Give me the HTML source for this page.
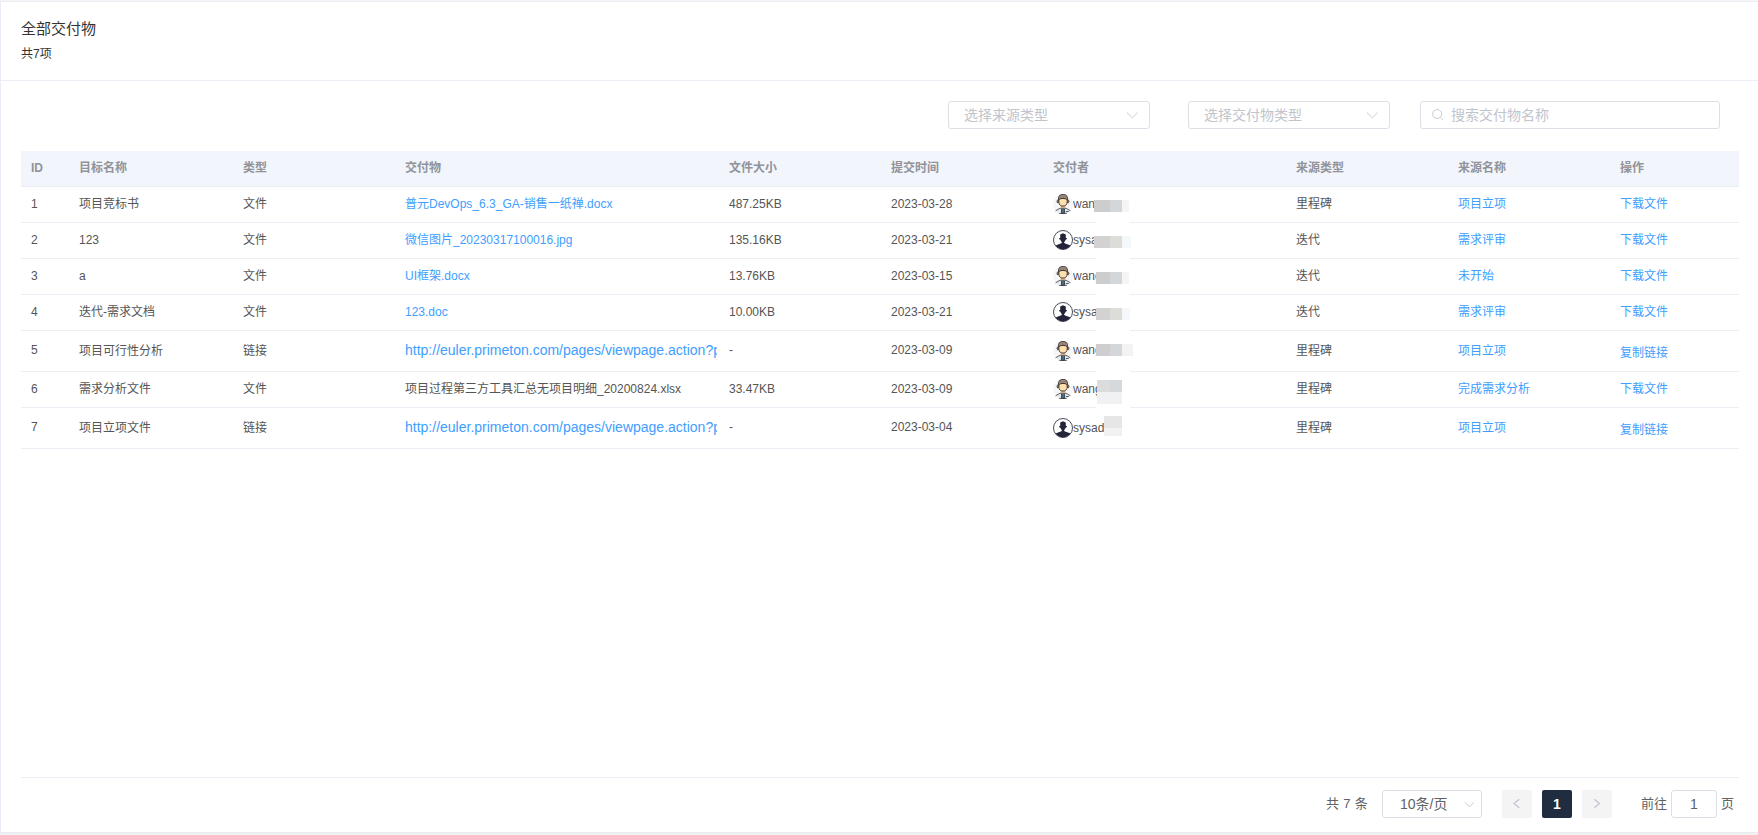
<!DOCTYPE html>
<html lang="zh-CN">
<head>
<meta charset="utf-8">
<title>全部交付物</title>
<style>
*{box-sizing:border-box;margin:0;padding:0}
html,body{width:1758px;height:835px;overflow:hidden;background:#f0f0f0;}
body{font-family:"Liberation Sans","Noto Sans CJK SC",sans-serif;font-size:12px;color:#4a4a4a;position:relative}
.topbar{position:absolute;left:0;top:0;width:1758px;height:1px;background:#f5f5f5}
.panel{position:absolute;left:0;top:1px;width:1758px;height:832px;background:#fff;border-left:1px solid #e9ecf5;border-top:1px solid #eceef5;border-bottom:1px solid #e9ecf3}
.title{position:absolute;left:21px;top:20px;font-size:15px;line-height:18px;color:#333}
.count{position:absolute;left:21px;top:46px;font-size:12px;line-height:16px;color:#333}
.hr{position:absolute;left:1px;top:80px;width:1757px;height:1px;background:#ebeef5}
.sel{position:absolute;top:101px;height:28px;border:1px solid #dcdfe6;border-radius:3px;background:#fff;color:#c0c4cc;font-size:14px;line-height:26px;padding-left:15px}
.sel svg{position:absolute;right:10px;top:8px}
.search svg{position:absolute;left:11px;top:6px}
table{position:absolute;left:21px;top:151px;width:1718px;border-collapse:collapse;table-layout:fixed}
th{line-height:16px;height:35px;background:#f2f5fc;color:#909399;font-weight:bold;text-align:left;padding-left:10px;font-size:12px;border-bottom:1px solid #ebeef5}
td{line-height:16px;height:36px;padding-left:10px;border-bottom:1px solid #ebeef5;white-space:nowrap;overflow:hidden;color:#555;font-size:12px}
tr.tall td{height:41px}
tr.tall td.l{padding-bottom:2px}
a,.lk{color:#409eff;text-decoration:none}
.big{font-size:14px}
.pline{position:absolute;left:21px;top:777px;width:1718px;height:1px;background:#ebeef5}
.pg{position:absolute;top:790px;height:28px;line-height:28px;font-size:13px;color:#606266}
.btn{position:absolute;top:790px;width:30px;height:28px;border-radius:2px;background:#f4f4f5;text-align:center}
.user{display:flex;align-items:center;height:24px}
.av{width:20px;height:20px;flex:none}
.blur{display:block;flex:none;height:12px;margin-top:3px}
.un{display:block;flex:none;overflow:hidden;white-space:nowrap;height:16px;line-height:16px}
.gap{position:absolute;left:1096px;width:34px;height:1px;background:#fff}
</style>
</head>
<body>
<div class="topbar"></div>
<div class="panel"></div>
<div class="title">全部交付物</div>
<div class="count">共7项</div>
<div class="hr"></div>

<div class="sel" style="left:948px;width:202px">选择来源类型<svg width="14" height="12" viewBox="0 0 14 12"><path d="M2 2.5 L7.4 7.8 L12.8 2.5" fill="none" stroke="#c4c8d0" stroke-width="0.95"/></svg></div>
<div class="sel" style="left:1188px;width:202px">选择交付物类型<svg width="14" height="12" viewBox="0 0 14 12"><path d="M2 2.5 L7.4 7.8 L12.8 2.5" fill="none" stroke="#c4c8d0" stroke-width="0.95"/></svg></div>
<div class="sel search" style="left:1420px;width:300px;padding-left:30px">搜索交付物名称<svg width="13" height="13" viewBox="0 0 13 13"><circle cx="5.2" cy="6" r="4.5" fill="none" stroke="#c8ccd3" stroke-width="1"/><path d="M8.4 9.3 L10.9 11.9" stroke="#c8ccd3" stroke-width="1"/></svg></div>

<table>
<colgroup><col style="width:48px"><col style="width:164px"><col style="width:162px"><col style="width:324px"><col style="width:162px"><col style="width:162px"><col style="width:243px"><col style="width:162px"><col style="width:162px"><col style="width:129px"></colgroup>
<thead><tr><th>ID</th><th>目标名称</th><th>类型</th><th>交付物</th><th>文件大小</th><th>提交时间</th><th>交付者</th><th>来源类型</th><th>来源名称</th><th>操作</th></tr></thead>
<tbody>
<tr><td>1</td><td>项目竞标书</td><td>文件</td><td><a>普元DevOps_6.3_GA-销售一纸禅.docx</a></td><td>487.25KB</td><td>2023-03-28</td><td><div class="user"><svg class="av" width="20" height="20" viewBox="0 0 20 20"><circle cx="10" cy="10" r="10" fill="#f6f6f6"/><path d="M2.9 16.6 Q5 15 7.6 14.3 L12.4 14.3 Q15 15 17.1 16.6 Q16 18.6 13.8 19.4 L6.2 19.4 Q4 18.6 2.9 16.6Z" fill="#e4ecee"/><path d="M2.9 16.6 Q5 15 7.6 14.2 M12.4 14.2 Q15 15 17.1 16.6 M13.2 17.5 L15.3 17.5 M6.6 19.4 L13.4 19.4" fill="none" stroke="#2f2a2a" stroke-width="0.75" stroke-linecap="round"/><rect x="8.6" y="14.2" width="2.8" height="5.1" fill="#456c88" stroke="#2a2f38" stroke-width="0.8"/><rect x="7.8" y="11.6" width="4.4" height="2.7" fill="#d0ab82"/><ellipse cx="4.9" cy="7.4" rx="0.9" ry="1.5" fill="#a8825c" stroke="#2f2a2a" stroke-width="0.7"/><ellipse cx="15.1" cy="7.4" rx="0.9" ry="1.5" fill="#a8825c" stroke="#2f2a2a" stroke-width="0.7"/><path d="M5.9 4.4 L14.1 4.4 L14.1 8 Q14.1 12 10 12 Q5.9 12 5.9 8Z" fill="#ffe0ac" stroke="#2f2a2a" stroke-width="0.8"/><path d="M5.5 5.7 Q4.9 0.4 10 0.4 Q15.1 0.4 14.5 5.7 Q13 5.3 12.6 4.9 Q10 3.6 7.4 4.9 Q7 5.3 5.5 5.7Z" fill="#9b8579" stroke="#2f2a2a" stroke-width="0.8" stroke-linejoin="round"/></svg><span class="un" style="width:21px">wan</span><i class="blur" style="width:16px;background:#cdcdcd;height:12px"></i><i class="blur" style="width:12px;background:#d4d7da;height:12px"></i><i class="blur" style="width:7px;background:#f5f5f5;height:12px"></i></div></td><td>里程碑</td><td><a>项目立项</a></td><td><a>下载文件</a></td></tr>
<tr><td>2</td><td>123</td><td>文件</td><td><a>微信图片_20230317100016.jpg</a></td><td>135.16KB</td><td>2023-03-21</td><td><div class="user"><svg class="av" width="20" height="20" viewBox="0 0 20 20"><defs><clipPath id="cp2"><circle cx="10" cy="10" r="9.3"/></clipPath></defs><circle cx="10" cy="10" r="9.5" fill="#fff" stroke="#2a2a3c" stroke-width="0.85"/><g clip-path="url(#cp2)" fill="#23233a"><path d="M7.2 5 Q7.2 4 8.4 4 L10 3.3 L11.6 4 Q12.8 4 12.8 5 L12.8 7.9 L13.9 8 Q14.1 9.3 13.2 9.6 L12.6 9.8 Q12.2 11 11.2 11.9 L11.2 13 Q12 13.6 13.5 13.9 Q15.8 14.4 17.6 15.6 L17.6 20 L2.4 20 L2.4 15.8 Q4.2 14.4 6.5 13.9 Q8 13.6 8.8 13 L8.8 11.9 Q7.8 11 7.4 9.8 L6.8 9.6 Q5.9 9.3 6.1 8 L7.2 7.9Z"/></g></svg><span class="un" style="width:21px">sysa</span><i class="blur" style="width:16px;background:#d3d1d2;height:12px"></i><i class="blur" style="width:12px;background:#dcdcd8;height:12px"></i><i class="blur" style="width:9px;background:#f5f8fb;height:12px"></i></div></td><td>迭代</td><td><a>需求评审</a></td><td><a>下载文件</a></td></tr>
<tr><td>3</td><td>a</td><td>文件</td><td><a>UI框架.docx</a></td><td>13.76KB</td><td>2023-03-15</td><td><div class="user"><svg class="av" width="20" height="20" viewBox="0 0 20 20"><circle cx="10" cy="10" r="10" fill="#f6f6f6"/><path d="M2.9 16.6 Q5 15 7.6 14.3 L12.4 14.3 Q15 15 17.1 16.6 Q16 18.6 13.8 19.4 L6.2 19.4 Q4 18.6 2.9 16.6Z" fill="#e4ecee"/><path d="M2.9 16.6 Q5 15 7.6 14.2 M12.4 14.2 Q15 15 17.1 16.6 M13.2 17.5 L15.3 17.5 M6.6 19.4 L13.4 19.4" fill="none" stroke="#2f2a2a" stroke-width="0.75" stroke-linecap="round"/><rect x="8.6" y="14.2" width="2.8" height="5.1" fill="#456c88" stroke="#2a2f38" stroke-width="0.8"/><rect x="7.8" y="11.6" width="4.4" height="2.7" fill="#d0ab82"/><ellipse cx="4.9" cy="7.4" rx="0.9" ry="1.5" fill="#a8825c" stroke="#2f2a2a" stroke-width="0.7"/><ellipse cx="15.1" cy="7.4" rx="0.9" ry="1.5" fill="#a8825c" stroke="#2f2a2a" stroke-width="0.7"/><path d="M5.9 4.4 L14.1 4.4 L14.1 8 Q14.1 12 10 12 Q5.9 12 5.9 8Z" fill="#ffe0ac" stroke="#2f2a2a" stroke-width="0.8"/><path d="M5.5 5.7 Q4.9 0.4 10 0.4 Q15.1 0.4 14.5 5.7 Q13 5.3 12.6 4.9 Q10 3.6 7.4 4.9 Q7 5.3 5.5 5.7Z" fill="#9b8579" stroke="#2f2a2a" stroke-width="0.8" stroke-linejoin="round"/></svg><span class="un" style="width:23px">wang</span><i class="blur" style="width:14px;background:#cdcdcd;height:12px"></i><i class="blur" style="width:12px;background:#d4d7da;height:12px"></i><i class="blur" style="width:7px;background:#f5f5f5;height:12px"></i></div></td><td>迭代</td><td><a>未开始</a></td><td><a>下载文件</a></td></tr>
<tr><td>4</td><td>迭代-需求文档</td><td>文件</td><td><a>123.doc</a></td><td>10.00KB</td><td>2023-03-21</td><td><div class="user"><svg class="av" width="20" height="20" viewBox="0 0 20 20"><defs><clipPath id="cp4"><circle cx="10" cy="10" r="9.3"/></clipPath></defs><circle cx="10" cy="10" r="9.5" fill="#fff" stroke="#2a2a3c" stroke-width="0.85"/><g clip-path="url(#cp4)" fill="#23233a"><path d="M7.2 5 Q7.2 4 8.4 4 L10 3.3 L11.6 4 Q12.8 4 12.8 5 L12.8 7.9 L13.9 8 Q14.1 9.3 13.2 9.6 L12.6 9.8 Q12.2 11 11.2 11.9 L11.2 13 Q12 13.6 13.5 13.9 Q15.8 14.4 17.6 15.6 L17.6 20 L2.4 20 L2.4 15.8 Q4.2 14.4 6.5 13.9 Q8 13.6 8.8 13 L8.8 11.9 Q7.8 11 7.4 9.8 L6.8 9.6 Q5.9 9.3 6.1 8 L7.2 7.9Z"/></g></svg><span class="un" style="width:23px">sysa</span><i class="blur" style="width:14px;background:#d3d1d2;height:12px"></i><i class="blur" style="width:12px;background:#dcdcd8;height:12px"></i><i class="blur" style="width:8px;background:#f5f8fb;height:12px"></i></div></td><td>迭代</td><td><a>需求评审</a></td><td><a>下载文件</a></td></tr>
<tr class="tall"><td class="l">5</td><td>项目可行性分析</td><td>链接</td><td><a class="big" style="display:block;width:312px;overflow:hidden;position:relative;top:-1px">http://euler.primeton.com/pages/viewpage.action?pageId=1</a></td><td class="l">-</td><td class="l">2023-03-09</td><td><div class="user"><svg class="av" width="20" height="20" viewBox="0 0 20 20"><circle cx="10" cy="10" r="10" fill="#f6f6f6"/><path d="M2.9 16.6 Q5 15 7.6 14.3 L12.4 14.3 Q15 15 17.1 16.6 Q16 18.6 13.8 19.4 L6.2 19.4 Q4 18.6 2.9 16.6Z" fill="#e4ecee"/><path d="M2.9 16.6 Q5 15 7.6 14.2 M12.4 14.2 Q15 15 17.1 16.6 M13.2 17.5 L15.3 17.5 M6.6 19.4 L13.4 19.4" fill="none" stroke="#2f2a2a" stroke-width="0.75" stroke-linecap="round"/><rect x="8.6" y="14.2" width="2.8" height="5.1" fill="#456c88" stroke="#2a2f38" stroke-width="0.8"/><rect x="7.8" y="11.6" width="4.4" height="2.7" fill="#d0ab82"/><ellipse cx="4.9" cy="7.4" rx="0.9" ry="1.5" fill="#a8825c" stroke="#2f2a2a" stroke-width="0.7"/><ellipse cx="15.1" cy="7.4" rx="0.9" ry="1.5" fill="#a8825c" stroke="#2f2a2a" stroke-width="0.7"/><path d="M5.9 4.4 L14.1 4.4 L14.1 8 Q14.1 12 10 12 Q5.9 12 5.9 8Z" fill="#ffe0ac" stroke="#2f2a2a" stroke-width="0.8"/><path d="M5.5 5.7 Q4.9 0.4 10 0.4 Q15.1 0.4 14.5 5.7 Q13 5.3 12.6 4.9 Q10 3.6 7.4 4.9 Q7 5.3 5.5 5.7Z" fill="#9b8579" stroke="#2f2a2a" stroke-width="0.8" stroke-linejoin="round"/></svg><span class="un" style="position:relative;top:-1px;width:23px">wang</span><i class="blur" style="position:relative;top:-2px;width:14px;background:#cfcdcd;height:12px"></i><i class="blur" style="position:relative;top:-2px;width:12px;background:#d4d7da;height:12px"></i><i class="blur" style="position:relative;top:-2px;width:11px;background:#f3f3f3;height:12px"></i></div></td><td>里程碑</td><td><a>项目立项</a></td><td><a style="position:relative;top:2px">复制链接</a></td></tr>
<tr><td>6</td><td>需求分析文件</td><td>文件</td><td>项目过程第三方工具汇总无项目明细_20200824.xlsx</td><td>33.47KB</td><td>2023-03-09</td><td><div class="user"><svg class="av" width="20" height="20" viewBox="0 0 20 20"><circle cx="10" cy="10" r="10" fill="#f6f6f6"/><path d="M2.9 16.6 Q5 15 7.6 14.3 L12.4 14.3 Q15 15 17.1 16.6 Q16 18.6 13.8 19.4 L6.2 19.4 Q4 18.6 2.9 16.6Z" fill="#e4ecee"/><path d="M2.9 16.6 Q5 15 7.6 14.2 M12.4 14.2 Q15 15 17.1 16.6 M13.2 17.5 L15.3 17.5 M6.6 19.4 L13.4 19.4" fill="none" stroke="#2f2a2a" stroke-width="0.75" stroke-linecap="round"/><rect x="8.6" y="14.2" width="2.8" height="5.1" fill="#456c88" stroke="#2a2f38" stroke-width="0.8"/><rect x="7.8" y="11.6" width="4.4" height="2.7" fill="#d0ab82"/><ellipse cx="4.9" cy="7.4" rx="0.9" ry="1.5" fill="#a8825c" stroke="#2f2a2a" stroke-width="0.7"/><ellipse cx="15.1" cy="7.4" rx="0.9" ry="1.5" fill="#a8825c" stroke="#2f2a2a" stroke-width="0.7"/><path d="M5.9 4.4 L14.1 4.4 L14.1 8 Q14.1 12 10 12 Q5.9 12 5.9 8Z" fill="#ffe0ac" stroke="#2f2a2a" stroke-width="0.8"/><path d="M5.5 5.7 Q4.9 0.4 10 0.4 Q15.1 0.4 14.5 5.7 Q13 5.3 12.6 4.9 Q10 3.6 7.4 4.9 Q7 5.3 5.5 5.7Z" fill="#9b8579" stroke="#2f2a2a" stroke-width="0.8" stroke-linejoin="round"/></svg><span class="un" style="width:24px">wang</span><i class="blur" style="position:relative;top:-5px;box-shadow:0 12px 0 #f0f1f3;width:13px;background:#dddcdc;height:12px"></i><i class="blur" style="position:relative;top:-5px;box-shadow:0 12px 0 #f0f1f3;width:12px;background:#d6d9dc;height:12px"></i></div></td><td>里程碑</td><td><a>完成需求分析</a></td><td><a>下载文件</a></td></tr>
<tr class="tall"><td class="l">7</td><td>项目立项文件</td><td>链接</td><td><a class="big" style="display:block;width:312px;overflow:hidden;position:relative;top:-1px">http://euler.primeton.com/pages/viewpage.action?pageId=1</a></td><td class="l">-</td><td class="l">2023-03-04</td><td><div class="user"><svg class="av" width="20" height="20" viewBox="0 0 20 20"><defs><clipPath id="cp7"><circle cx="10" cy="10" r="9.3"/></clipPath></defs><circle cx="10" cy="10" r="9.5" fill="#fff" stroke="#2a2a3c" stroke-width="0.85"/><g clip-path="url(#cp7)" fill="#23233a"><path d="M7.2 5 Q7.2 4 8.4 4 L10 3.3 L11.6 4 Q12.8 4 12.8 5 L12.8 7.9 L13.9 8 Q14.1 9.3 13.2 9.6 L12.6 9.8 Q12.2 11 11.2 11.9 L11.2 13 Q12 13.6 13.5 13.9 Q15.8 14.4 17.6 15.6 L17.6 20 L2.4 20 L2.4 15.8 Q4.2 14.4 6.5 13.9 Q8 13.6 8.8 13 L8.8 11.9 Q7.8 11 7.4 9.8 L6.8 9.6 Q5.9 9.3 6.1 8 L7.2 7.9Z"/></g></svg><span class="un" style="width:31px">sysad</span><i class="blur" style="position:relative;top:-7px;box-shadow:0 8px 0 #f1f1f1;width:18px;background:#e6e6e6;height:12px"></i></div></td><td>里程碑</td><td><a>项目立项</a></td><td><a style="position:relative;top:2px">复制链接</a></td></tr>
</tbody>
</table>

<div class="gap" style="top:222px"></div><div class="gap" style="top:258px"></div><div class="gap" style="top:294px"></div><div class="gap" style="top:330px"></div><div class="gap" style="top:371px"></div><div class="gap" style="top:407px"></div>
<div class="pline"></div>
<div class="pg" style="left:1326px;word-spacing:0.7px">共 7 条</div>
<div class="sel" style="left:1382px;top:790px;width:100px;color:#606266;padding-left:17px">10条/页<svg width="12" height="8" viewBox="0 0 12 8" style="right:5px;top:10px"><path d="M1 1.4 L5.4 5.8 L9.9 1.4" fill="none" stroke="#c4c8d0" stroke-width="0.95"/></svg></div>
<div class="btn" style="left:1502px"><svg width="30" height="28" viewBox="0 0 30 28"><path d="M17.2 9.2 L12 13.5 L17.2 17.8" fill="none" stroke="#c0c4cc" stroke-width="1.2"/></svg></div>
<div class="btn" style="left:1542px;background:#202d40;color:#fff;font-weight:bold;font-size:14px;line-height:28px">1</div>
<div class="btn" style="left:1582px"><svg width="30" height="28" viewBox="0 0 30 28"><path d="M12.3 9.2 L17.5 13.5 L12.3 17.8" fill="none" stroke="#c0c4cc" stroke-width="1.2"/></svg></div>
<div class="pg" style="left:1641px">前往</div>
<div class="sel" style="left:1671px;top:790px;width:46px;color:#606266;padding-left:0;text-align:center">1</div>
<div class="pg" style="left:1721px">页</div>
</body>
</html>
